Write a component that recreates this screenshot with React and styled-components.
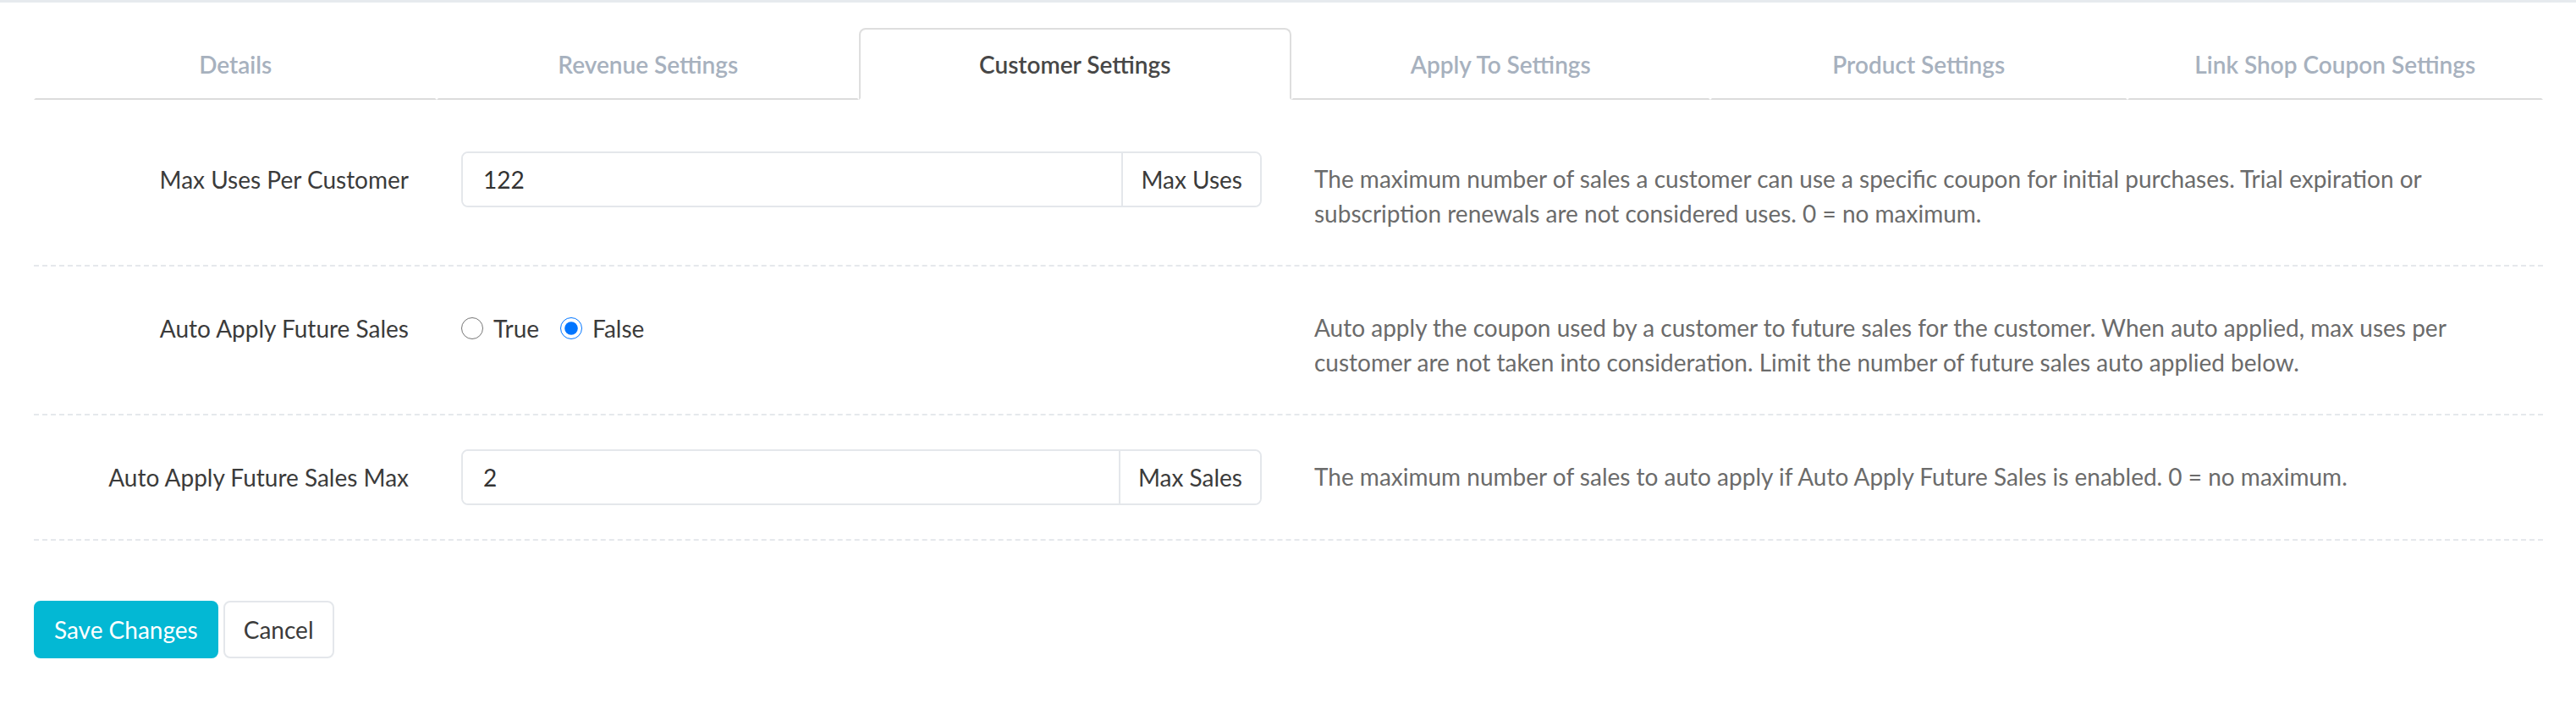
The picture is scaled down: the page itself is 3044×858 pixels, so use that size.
import styled, { createGlobalStyle, css } from "styled-components";

const GlobalStyle = createGlobalStyle`
  html, body {
    margin: 0;
    background: #fff;
  }
  body {
    font-family: Lato, "Liberation Sans", sans-serif;
    color: #3b3b3b;
  }
  * { box-sizing: border-box; }
`;

const tabs = [
  { id: "details", label: "Details" },
  { id: "revenue", label: "Revenue Settings" },
  { id: "customer", label: "Customer Settings" },
  { id: "apply", label: "Apply To Settings" },
  { id: "product", label: "Product Settings" },
  { id: "linkshop", label: "Link Shop Coupon Settings" },
];

const App = () => {
  const activeTab = "customer";

  return (
    <Page>
      <GlobalStyle />
      <TabNav>
        {tabs.map((t) => (
          <Tab key={t.id} $active={t.id === activeTab}>
            {t.label}
          </Tab>
        ))}
      </TabNav>

      <Form>
        <FormRow>
          <Label>Max Uses Per Customer</Label>
          <InputGroup>
            <TextInput defaultValue="122" />
            <Addon>Max Uses</Addon>
          </InputGroup>
          <HelpText>
            The maximum number of sales a customer can use a specific coupon for initial purchases. Trial expiration or
            subscription renewals are not considered uses. 0 = no maximum.
          </HelpText>
        </FormRow>

        <FormRow>
          <Label>Auto Apply Future Sales</Label>
          <RadioGroup>
            <RadioOption>
              <Radio type="radio" name="autoApply" value="true" />
              True
            </RadioOption>
            <RadioOption>
              <Radio type="radio" name="autoApply" value="false" defaultChecked />
              False
            </RadioOption>
          </RadioGroup>
          <HelpText>
            Auto apply the coupon used by a customer to future sales for the customer. When auto applied, max uses per
            customer are not taken into consideration. Limit the number of future sales auto applied below.
          </HelpText>
        </FormRow>

        <FormRow>
          <Label>Auto Apply Future Sales Max</Label>
          <InputGroup>
            <TextInput defaultValue="2" />
            <Addon>Max Sales</Addon>
          </InputGroup>
          <HelpText>
            The maximum number of sales to auto apply if Auto Apply Future Sales is enabled. 0 = no maximum.
          </HelpText>
        </FormRow>
      </Form>

      <Actions>
        <Button $primary>Save Changes</Button>
        <Button>Cancel</Button>
      </Actions>
    </Page>
  );
};

export default App;

const Page = styled.div`
  width: 3044px;
  min-height: 858px;
  border-top: 3px solid #e6eaee;
  padding: 30px 39px 0 40px;
`;

const TabNav = styled.div`
  display: grid;
  grid-template-columns: 476fr 498fr 510fr 495fr 492fr 491fr;
`;

const Tab = styled.div`
  height: 85px;
  display: flex;
  align-items: center;
  justify-content: center;
  font-size: 28px;
  font-weight: 600;
  color: #a7b1be;
  border: 2px solid transparent;
  border-bottom-color: #dcdcdc;
  cursor: pointer;

  ${(p) =>
    p.$active &&
    css`
      color: #474747;
      border-color: #dedede;
      border-bottom-color: transparent;
      border-radius: 8px 8px 0 0;
    `}
`;

const Form = styled.div`
  margin-top: 21px;
`;

const FormRow = styled.div`
  display: grid;
  grid-template-columns: 443px 946px 1fr;
  column-gap: 62px;
  align-items: start;
  padding: 40px 0;
  border-bottom: 2px dashed #e5e8ec;
`;

const Label = styled.label`
  height: 66px;
  display: flex;
  align-items: center;
  justify-content: flex-end;
  font-size: 28px;
  color: #3b3b3b;
`;

const InputGroup = styled.div`
  display: flex;
  height: 66px;
  border: 2px solid #e4e7eb;
  border-radius: 8px;
  overflow: hidden;
`;

const TextInput = styled.input`
  flex: 1;
  min-width: 0;
  border: none;
  outline: none;
  padding: 0 24px;
  font-family: inherit;
  font-size: 28px;
  color: #333;
  background: #fff;
`;

const Addon = styled.span`
  display: flex;
  align-items: center;
  padding: 0 21px;
  border-left: 2px solid #e4e7eb;
  font-size: 28px;
  color: #3b3b3b;
  background: #fff;
`;

const HelpText = styled.p`
  margin: 12px 0 0;
  font-size: 28px;
  line-height: 41px;
  color: #6b6b6b;
`;

const RadioGroup = styled.div`
  height: 66px;
  display: flex;
  align-items: center;
  gap: 25px;
`;

const RadioOption = styled.label`
  display: flex;
  align-items: center;
  font-size: 28px;
  color: #3b3b3b;
`;

const Radio = styled.input`
  width: 26px;
  height: 26px;
  margin: 0 12px 0 0;
`;

const Actions = styled.div`
  display: flex;
  gap: 6px;
  margin-top: 71px;
`;

const Button = styled.button`
  height: 68px;
  padding: 0 22px;
  font-family: inherit;
  font-size: 28px;
  border-radius: 8px;
  cursor: pointer;
  background: ${(p) => (p.$primary ? "#03b8d4" : "#fff")};
  color: ${(p) => (p.$primary ? "#fff" : "#3b3b3b")};
  border: 2px solid ${(p) => (p.$primary ? "#03b8d4" : "#e4e7eb")};
`;
